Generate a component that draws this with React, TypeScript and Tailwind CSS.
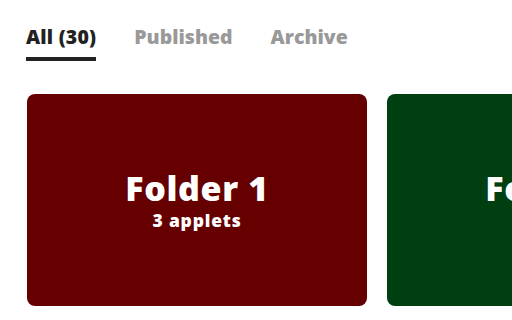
export default function App() {
  const tabs = [
    { label: 'All (30)', active: true },
    { label: 'Published', active: false },
    { label: 'Archive', active: false },
  ]
  const folders = [
    { name: 'Folder 1', count: '3 applets', color: 'bg-[#660000]' },
    { name: 'Folder 2', count: '5 applets', color: 'bg-[#004010]' },
  ]

  return (
    <div className="w-[512px] h-[320px] overflow-hidden bg-white font-['Open_Sans','Noto_Sans',sans-serif]">
      <div className="flex gap-[38px] pl-[26px] pt-[23px]">
        {tabs.map((tab) => (
          <div key={tab.label} className="flex flex-col">
            <span
              className={`text-[19.5px] font-extrabold leading-[28px] ${
                tab.active ? 'text-[#222222] tracking-[0.2px]' : 'text-[#999999]'
              }`}
            >
              {tab.label}
            </span>
            <div className={`mt-[6px] h-[4px] ${tab.active ? 'bg-[#222222]' : 'bg-transparent'}`} />
          </div>
        ))}
      </div>

      <div className="flex gap-5 pl-[27px] mt-[33px]">
        {folders.map((f) => (
          <div
            key={f.name}
            className={`${f.color} w-[340px] h-[212px] shrink-0 rounded-lg flex flex-col items-center justify-center text-white`}
          >
            <span className="text-[34px] font-extrabold leading-[38px] tracking-[0.6px]">{f.name}</span>
            <span className="mt-[2px] text-[17.5px] font-extrabold leading-[22px] tracking-[0.8px]">{f.count}</span>
          </div>
        ))}
      </div>
    </div>
  )
}
